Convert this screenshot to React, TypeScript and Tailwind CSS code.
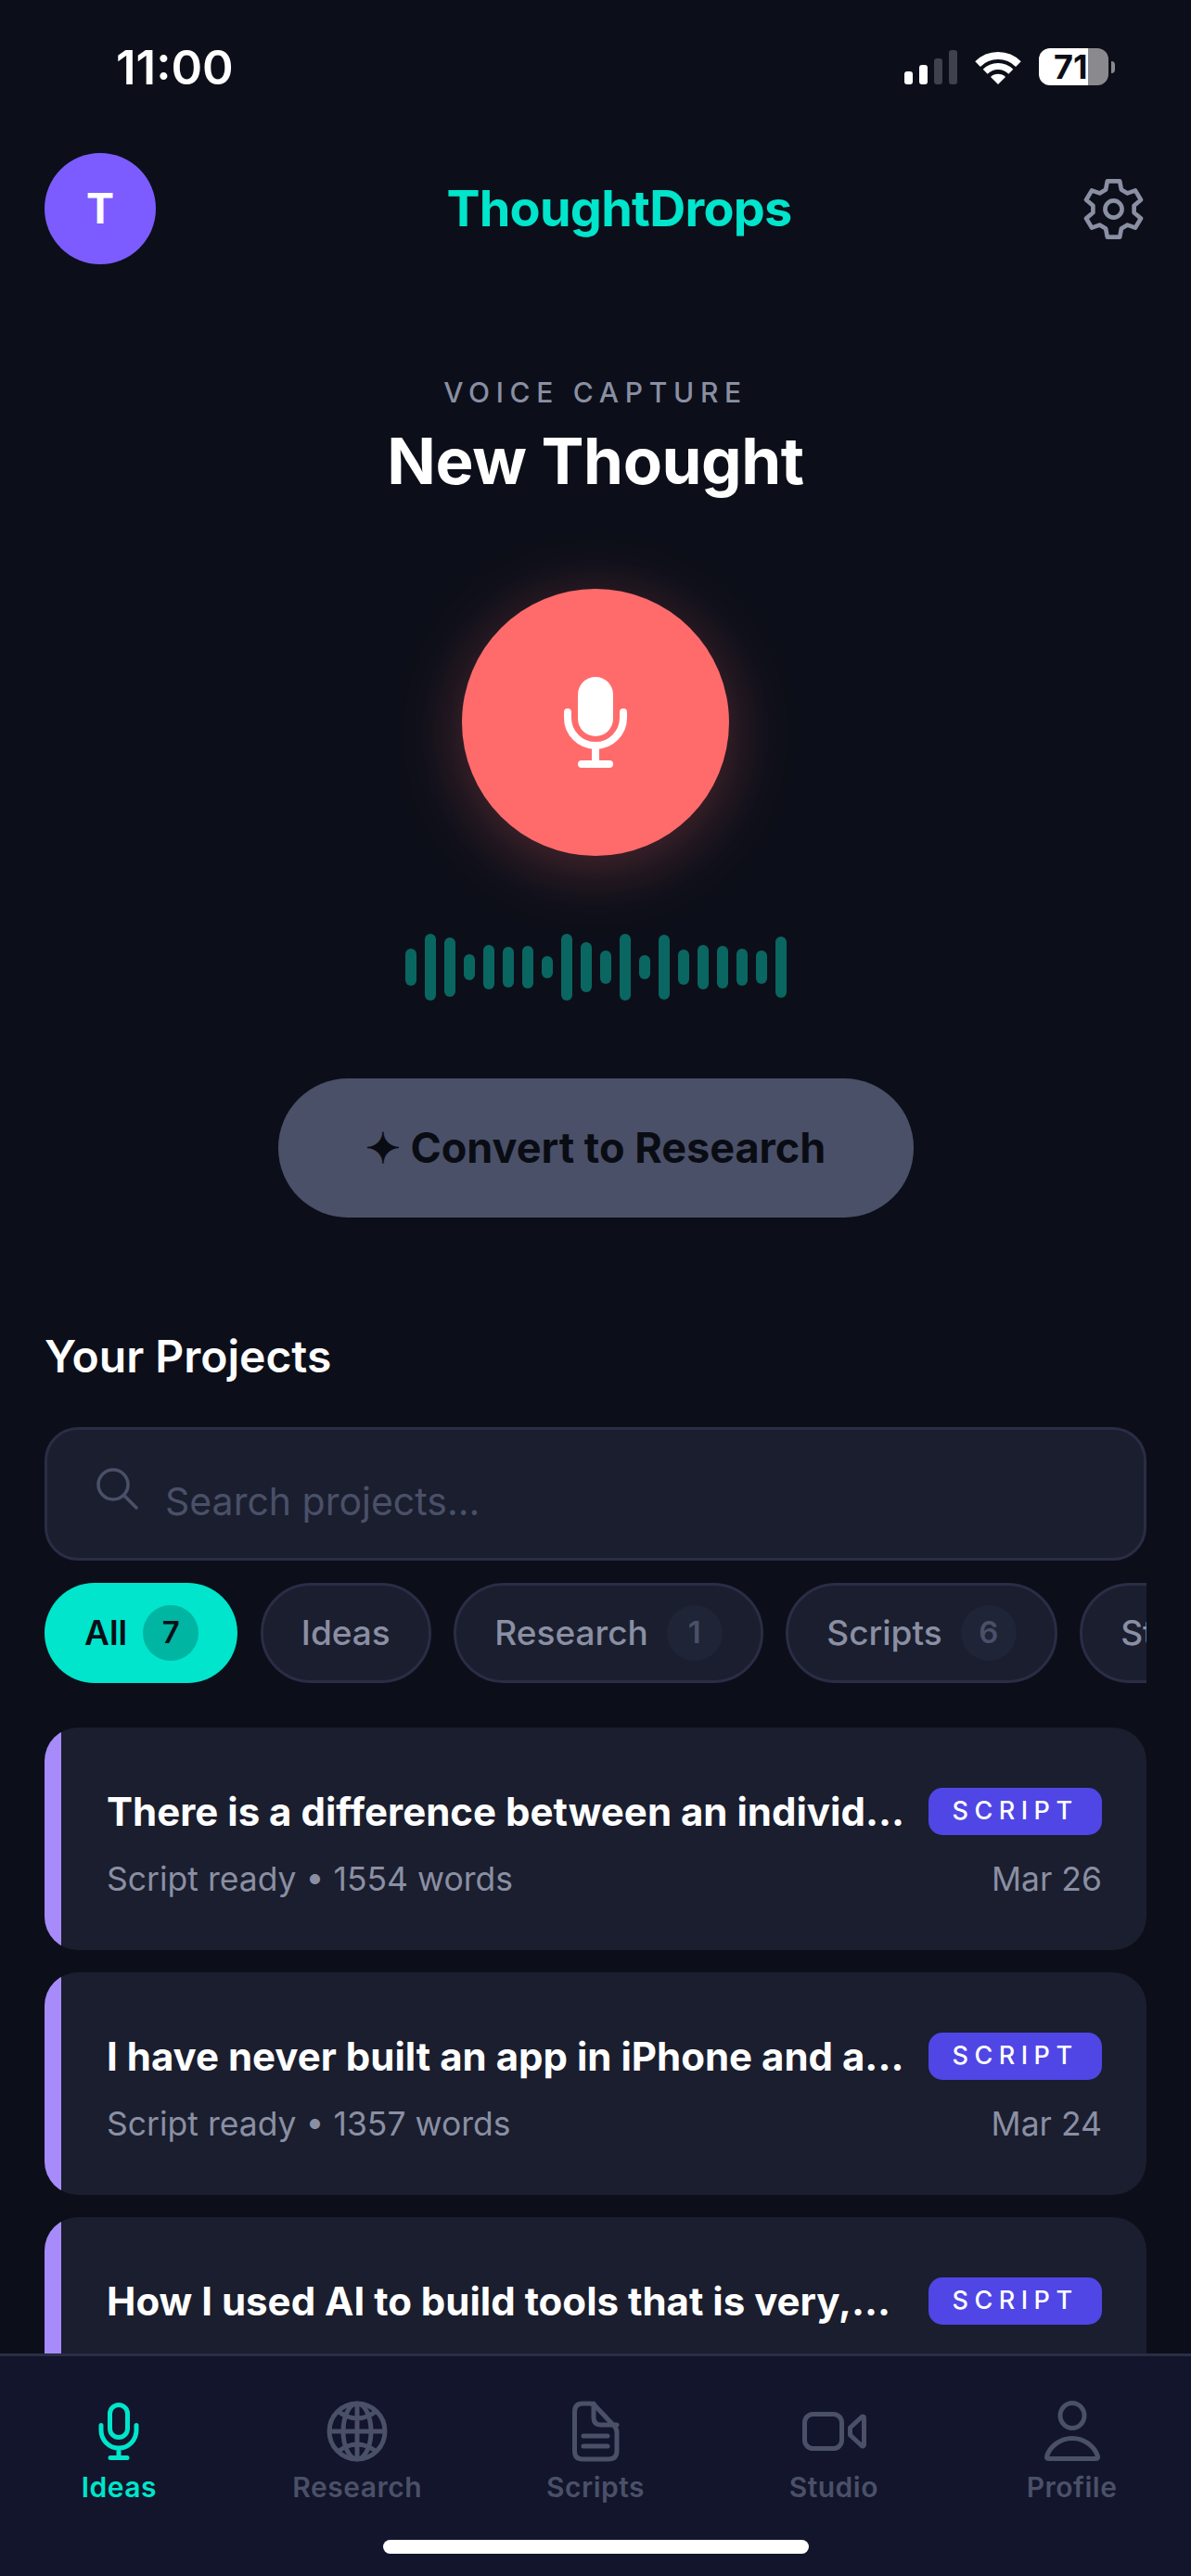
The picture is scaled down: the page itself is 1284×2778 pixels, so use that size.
import React from 'react';

const waveHeights = [40, 72, 64, 28, 48, 44, 46, 24, 72, 54, 36, 72, 26, 70, 38, 48, 46, 40, 36, 66];

const chips = [
  { label: 'All', count: 7, active: true },
  { label: 'Ideas' },
  { label: 'Research', count: 1 },
  { label: 'Scripts', count: 6 },
  { label: 'Studio' },
];

const projects = [
  { title: 'There is a difference between an individ...', meta: 'Script ready • 1554 words', date: 'Mar 26' },
  { title: 'I have never built an app in iPhone and a...', meta: 'Script ready • 1357 words', date: 'Mar 24' },
  { title: 'How I used AI to build tools that is very,...' },
];

const StatusBar = () => (
  <div className="h-[165px] shrink-0 flex items-start justify-between pt-[48px] pl-[125px] pr-[82px]">
    <span className="text-[51px] leading-[50px] font-semibold text-white">11:00</span>
    <div className="flex items-center gap-[19px] pt-[4px]">
      <div className="flex items-end gap-[6.5px] h-[38px]">
        <div className="w-[9.5px] h-[14px] rounded-[3px] bg-white" />
        <div className="w-[9.5px] h-[21px] rounded-[3px] bg-white" />
        <div className="w-[9.5px] h-[28px] rounded-[3px] bg-[#3F424C]" />
        <div className="w-[9.5px] h-[37px] rounded-[3px] bg-[#3F424C]" />
      </div>
      <svg width="50" height="36" viewBox="0 0 50 36" fill="none" stroke="white" className="mt-[2px]">
        <path d="M3.1 14.1A31 31 0 0 1 46.9 14.1" strokeWidth="8" />
        <path d="M11.2 22.2A19.5 19.5 0 0 1 38.8 22.2" strokeWidth="7" />
        <path d="M25 36L17 28A11.3 11.3 0 0 1 33 28Z" fill="white" stroke="none" />
      </svg>
      <div className="flex items-center gap-[3px]">
        <div className="relative w-[75px] h-[40px] rounded-[12px] overflow-hidden flex">
          <div className="w-[53px] bg-white" />
          <div className="flex-1 bg-[#8A8A8E]" />
          <span className="absolute left-[16px] top-0 text-[36px] leading-[40px] font-bold text-[#0B0E17]">71</span>
        </div>
        <div className="w-[4px] h-[13px] rounded-r-[4px] bg-[#8A8A8E]" />
      </div>
    </div>
  </div>
);

const Header = () => (
  <div className="h-[120px] shrink-0 flex items-center justify-between pl-[48px] pr-[50px]">
    <div className="w-[120px] h-[120px] rounded-full bg-[#7C5CFF] flex items-center justify-center text-[45px] font-bold text-white">T</div>
    <span className="text-[54px] leading-[118px] font-bold tracking-[-0.75px] text-[#00E5CC]">ThoughtDrops</span>
    <svg width="67" height="67" viewBox="50 35 200 200" fill="none" stroke="#8A8FA3" strokeWidth="14" strokeLinejoin="round">
      <path d="M130 45H170L175 72L195 84L220 75L238 105L216 124V146L238 165L220 195L195 186L175 198L170 225H130L125 198L105 186L80 195L62 165L84 146V124L62 105L80 75L105 84L125 72Z" />
      <circle cx="150" cy="135" r="27" />
    </svg>
  </div>
);

const Recorder = () => (
  <div className="flex flex-col items-center shrink-0">
    <p className="mt-[120px] text-[30px] leading-[36px] tracking-[6.7px] font-medium text-[#8A8FA3]">VOICE CAPTURE</p>
    <h1 className="mt-[14px] text-[69px] leading-[84px] font-bold tracking-[-0.4px] text-white">New Thought</h1>
    <div className="mt-[96px] w-[288px] h-[288px] rounded-full bg-[#FF6B6B] flex items-center justify-center shadow-[0_12px_72px_rgba(255,107,107,0.3)]">
      <svg width="84" height="106" viewBox="600 726 84 106" fill="none" stroke="white" strokeWidth="8" strokeLinecap="round">
        <rect x="623" y="730" width="38" height="64" rx="19" fill="white" stroke="none" />
        <path d="M612 768V774A30 30 0 0 0 672 774V768" />
        <path d="M642 804V824M627 824H657" />
      </svg>
    </div>
    <div className="mt-[84px] h-[72px] flex items-center gap-[9px]">
      {waveHeights.map((h, i) => (
        <div key={i} className="w-[12px] rounded-full bg-[#0A6661]" style={{ height: h }} />
      ))}
    </div>
    <button type="button" className="mt-[84px] w-[685px] h-[150px] rounded-full bg-[#4A5068] text-[45px] font-bold text-[#0A0C14]">
      ✦ Convert to Research
    </button>
  </div>
);

const Projects = () => (
  <div className="mx-[48px] flex flex-col">
    <h2 className="mt-[120px] text-[48px] leading-[60px] font-semibold text-white">Your Projects</h2>
    <div className="mt-[46px] h-[144px] shrink-0 rounded-[36px] border-[3px] border-[#2A2D45] bg-[#1A1E2E] flex items-center pl-[53px]">
      <svg width="46" height="46" viewBox="0 0 46 46" fill="none" stroke="#4A5068" strokeWidth="3.5" strokeLinecap="round" className="-mt-[10px]">
        <circle cx="18" cy="18" r="16" />
        <path d="M29.5 29.5L43 43" />
      </svg>
      <span className="ml-[28px] mt-[18px] text-[41px] text-[#4A5068]">Search projects...</span>
    </div>
    <div className="mt-[24px] h-[108px] shrink-0 flex gap-[24.5px] overflow-hidden">
      {chips.map((chip) => (
        <div
          key={chip.label}
          className={chip.active
            ? 'h-[108px] shrink-0 rounded-full bg-[#00E5CC] pl-[43px] pr-[42px] flex items-center gap-[17px] text-[37px] font-semibold text-[#0B0E17]'
            : 'h-[108px] shrink-0 rounded-full border-[3px] border-[#2A2D45] bg-[#1A1E2E] px-[41px] flex items-center gap-[20px] text-[37px] font-medium text-[#8A8FA3]'}
        >
          <span>{chip.label}</span>
          {chip.count !== undefined && (
            <span className={chip.active
              ? 'w-[60px] h-[60px] rounded-full bg-[#00B5A2] flex items-center justify-center text-[33px] font-semibold text-[#0B0E17]'
              : 'w-[60px] h-[60px] rounded-full bg-[#1F2437] flex items-center justify-center text-[33px] font-semibold text-[#4A5068]'}
            >
              {chip.count}
            </span>
          )}
        </div>
      ))}
    </div>
    <div className="mt-[48px] flex flex-col gap-[24px]">
      {projects.map((p) => (
        <div key={p.title} className="h-[240px] shrink-0 rounded-[36px] overflow-hidden bg-[#1A1E2E] flex">
          <div className="w-[18px] shrink-0 bg-[#A78BFA]" />
          <div className="flex-1 min-w-0 pt-[65px] pl-[49px] pr-[48px]">
            <div className="flex items-center justify-between h-[51px]">
              <span className="text-[42px] font-bold text-white whitespace-nowrap">{p.title}</span>
              <span className="w-[187px] h-[51px] rounded-[15px] bg-[#4F46E5] flex items-center justify-center text-[27px] font-medium tracking-[6.5px] text-white">SCRIPT</span>
            </div>
            {p.meta && (
              <div className="mt-[24px] flex items-center justify-between text-[35.5px] leading-[48px] text-[#8A8FA3]">
                <span>{p.meta}</span>
                <span>{p.date}</span>
              </div>
            )}
          </div>
        </div>
      ))}
    </div>
  </div>
);

const MicIcon = () => (
  <svg width="66" height="66" viewBox="0 0 66 66" fill="none" stroke="#00E5CC" strokeWidth="5" strokeLinecap="round">
    <rect x="23.5" y="4.5" width="19" height="35" rx="9.5" />
    <path d="M14 26.5V32A19 19 0 0 0 52 32V26.5M33 51V61.5M24 61.5H42" />
  </svg>
);

const GlobeIcon = () => (
  <svg width="66" height="66" viewBox="0 0 66 66" fill="none" stroke="#4A5068" strokeWidth="5">
    <circle cx="33" cy="33" r="30" />
    <ellipse cx="33" cy="33" rx="15" ry="30" />
    <path d="M33 3V63M3 33H63M12 11Q33 27 54 11M12 55Q33 39 54 55" />
  </svg>
);

const FileIcon = () => (
  <svg width="66" height="66" viewBox="0 0 66 66" fill="none" stroke="#4A5068" strokeWidth="5" strokeLinecap="round" strokeLinejoin="round">
    <path d="M19 3H27Q31 3 34 7L53 27Q56 30 56 34V54Q56 63 47 63H19Q10.5 63 10.5 54V12Q10.5 3 19 3Z" />
    <path d="M31 3V18Q31 26 39 26H56M20 38H46M20 49H46" />
  </svg>
);

const VideoIcon = () => (
  <svg width="72" height="66" viewBox="0 0 72 66" fill="none" stroke="#4A5068" strokeWidth="5" strokeLinejoin="round">
    <rect x="4.5" y="14.5" width="40" height="37" rx="9" />
    <path d="M53.5 29L66 17.5Q68.5 16 68.5 19V47Q68.5 50 66 48.5L53.5 37Z" />
  </svg>
);

const PersonIcon = () => (
  <svg width="66" height="66" viewBox="0 0 66 66" fill="none" stroke="#4A5068" strokeWidth="5" strokeLinejoin="round">
    <ellipse cx="33" cy="16" rx="13" ry="13.5" />
    <path d="M33 40.5C20 40.5 9 49 5.5 60Q5 62.5 8 62.5H58Q61 62.5 60.5 60C57 49 46 40.5 33 40.5Z" />
  </svg>
);

const navItems = [
  { label: 'Ideas', icon: <MicIcon />, active: true },
  { label: 'Research', icon: <GlobeIcon /> },
  { label: 'Scripts', icon: <FileIcon /> },
  { label: 'Studio', icon: <VideoIcon /> },
  { label: 'Profile', icon: <PersonIcon /> },
];

const BottomNav = () => (
  <div className="h-[240px] shrink-0 border-t-[3px] border-[#2A2D45] bg-[#12152B] flex flex-col">
    <div className="grid grid-cols-5 pt-[48px]">
      {navItems.map((item) => (
        <div key={item.label} className="flex flex-col items-center">
          <div className="h-[66px] flex justify-center">{item.icon}</div>
          <span className={item.active
            ? 'mt-[6px] text-[30px] leading-[42px] tracking-[0.5px] font-semibold text-[#00E5CC]'
            : 'mt-[6px] text-[30px] leading-[42px] tracking-[0.5px] font-semibold text-[#4A5068]'}
          >
            {item.label}
          </span>
        </div>
      ))}
    </div>
    <div className="mt-auto mb-[24px] mx-auto w-[459px] h-[15px] rounded-full bg-white" />
  </div>
);

export default function App() {
  return (
    <div className="w-[1284px] h-[2778px] bg-[#0C0F19] flex flex-col overflow-hidden font-['Inter',sans-serif]">
      <div className="flex-1 min-h-0 overflow-hidden">
        <StatusBar />
        <Header />
        <Recorder />
        <Projects />
      </div>
      <BottomNav />
    </div>
  );
}
